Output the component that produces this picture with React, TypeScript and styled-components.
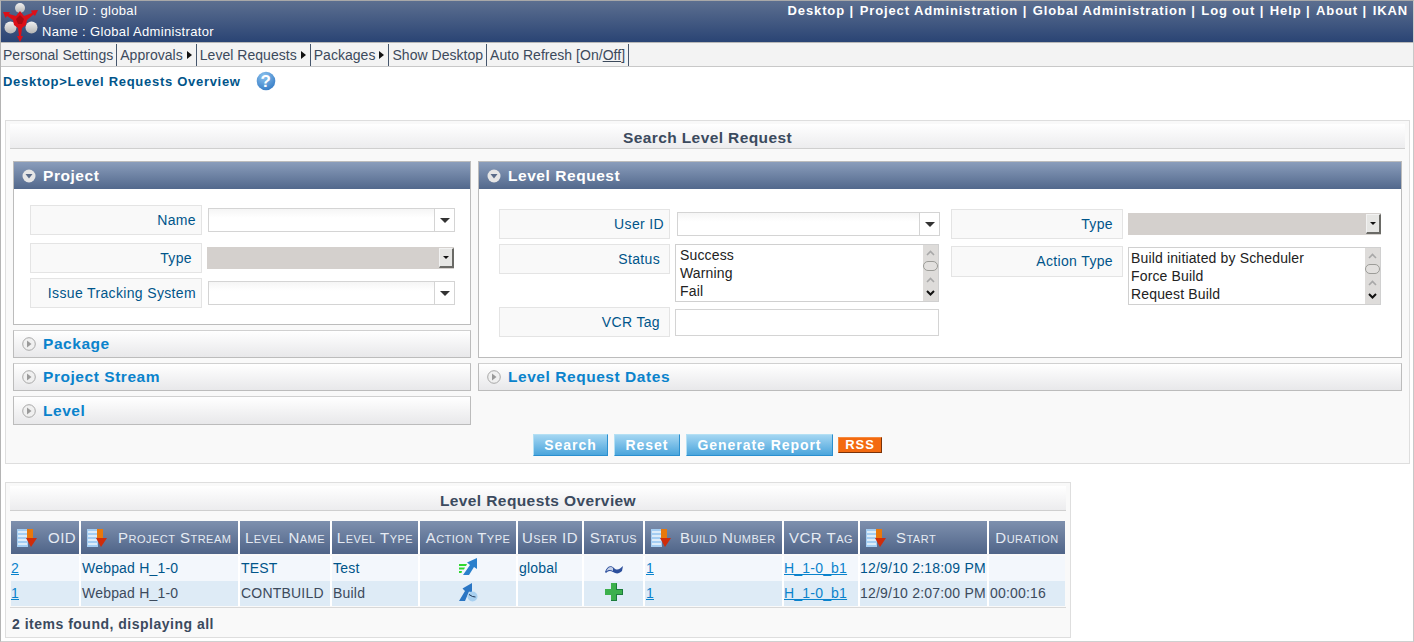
import React from 'react';
import styled, { createGlobalStyle } from 'styled-components';

const GlobalStyle = createGlobalStyle`
    html, body {
        margin: 0;
        padding: 0;
        background: #fff;
        font-family: "Liberation Sans", Arial, sans-serif;
    }
`;

const Page = styled.div`
    width: 1414px;
    height: 642px;
    box-sizing: border-box;
    border-top: 1px solid #a8a8a8;
    border-left: 1px solid #b4b4b4;
    border-right: 1px solid #c8c8c8;
    border-bottom: 1px solid #d0d0d0;
    overflow: hidden;
`;

const Header = styled.div`
    height: 41px;
    display: flex;
    justify-content: space-between;
    background: linear-gradient(#5c6f90, #2a4474);
    color: #fff;
    font-size: 13px;
`;

const UserBlock = styled.div`
    display: flex;
    gap: 1px;
`;

const UserText = styled.div`
    margin-top: -1px;
    line-height: 21px;
    letter-spacing: 0.35px;
`;

const TopNav = styled.div`
    font-weight: bold;
    letter-spacing: 0.89px;
    padding: 2px 5px 0 0;
    line-height: 15px;
`;

const TopLink = styled.span`
    margin-left: 5.55px;
`;

const Toolbar = styled.div`
    height: 25px;
    box-sizing: border-box;
    display: flex;
    align-items: center;
    background: #f3f3f3;
    border-top: 1px solid #b8b8b8;
    border-bottom: 1px solid #c8c8c8;
    font-size: 14px;
    letter-spacing: 0.03px;
    color: #3c4a5c;
    padding-left: 2px;
`;

const ToolItem = styled.div`
    height: 22px;
    line-height: 22px;
    padding-right: 3px;
    margin-right: 3px;
    border-right: 1px solid #46566c;
    display: flex;
    align-items: center;
    white-space: nowrap;
`;

const ToolArrow = styled.span`
    width: 0;
    height: 0;
    margin: 0 1px 0 4px;
    border-left: 5px solid #111;
    border-top: 4px solid transparent;
    border-bottom: 4px solid transparent;
`;

const Crumb = styled.div`
    height: 53px;
    box-sizing: border-box;
    display: flex;
    align-items: flex-start;
    padding: 3px 0 0 2px;
    color: #00558a;
    font-size: 13px;
    font-weight: bold;
    letter-spacing: 0.71px;
    line-height: 23px;
`;

const HelpBall = styled.svg`
    margin-left: 15px;
    margin-top: 1px;
`;

const Panel = styled.div<{ $width: number; $height: number; $top?: number }>`
    width: ${p => p.$width}px;
    height: ${p => p.$height}px;
    margin-left: 4px;
    margin-top: ${p => p.$top ?? 0}px;
    box-sizing: border-box;
    background: #f9f9f9;
    border: 1px solid #dedede;
    padding: 3px 4px 0;
`;

const PanelTitle = styled.div<{ $line: number }>`
    height: 25px;
    box-sizing: border-box;
    line-height: ${p => p.$line}px;
    text-align: center;
    font-size: 15.5px;
    font-weight: bold;
    letter-spacing: 0.4px;
    color: #3b4a5e;
    background: linear-gradient(#ffffff, #ececee);
    border-bottom: 1px solid #cfcfcf;
`;

const Columns = styled.div`
    display: flex;
    gap: 7px;
    margin: 12px 3px 0;
`;

const Column = styled.div<{ $width: number }>`
    width: ${p => p.$width}px;
    display: flex;
    flex-direction: column;
    gap: 5px;
`;

const Section = styled.div`
    box-sizing: border-box;
    border: 1px solid #bcbcbc;
    background: #fff;
`;

const SectionHead = styled.div<{ $open?: boolean; $height?: number }>`
    box-sizing: border-box;
    height: ${p => p.$height ?? (p.$open ? 27 : 28)}px;
    display: flex;
    align-items: center;
    gap: 7px;
    padding-left: 8px;
    font-size: 15.5px;
    font-weight: bold;
    letter-spacing: 0.55px;
    color: ${p => p.$open ? '#fff' : '#0a83cc'};
    background: ${p => p.$open ? 'linear-gradient(#8a9dbb, #52688c)' : 'linear-gradient(#ffffff, #e8e8ea)'};
    border-bottom: ${p => p.$open ? '0' : '1px solid #bcbcbc'};
    border-left: ${p => p.$open ? '0' : '1px solid #bcbcbc'};
    border-right: ${p => p.$open ? '0' : '1px solid #bcbcbc'};
    border-top: ${p => p.$open ? '0' : '1px solid #d0d0d0'};
`;

const ProjectBody = styled.div`
    height: 135px;
    box-sizing: border-box;
    padding: 16px 0 0 16px;
`;

const RequestBody = styled.div`
    height: 168px;
    box-sizing: border-box;
    padding: 20px 0 0 20px;
    display: flex;
    gap: 12px;
`;

const FieldStack = styled.div<{ $width: number }>`
    width: ${p => p.$width}px;
`;

const Row = styled.div<{ $top?: number; $gap: number }>`
    display: flex;
    align-items: flex-start;
    gap: ${p => p.$gap}px;
    margin-top: ${p => p.$top ?? 0}px;
`;

const Label = styled.div<{ $width: number; $pad: number; $height?: number }>`
    width: ${p => p.$width}px;
    height: ${p => p.$height ?? 30}px;
    flex: none;
    box-sizing: border-box;
    background: #f9f9f9;
    border: 1px solid #e4e4e4;
    text-align: right;
    padding-right: ${p => p.$pad}px;
    line-height: 28px;
    font-size: 14px;
    letter-spacing: 0.35px;
    color: #00558a;
    white-space: nowrap;
`;

const Combo = styled.div<{ $width: number; $top: number }>`
    width: ${p => p.$width}px;
    height: 24px;
    margin-top: ${p => p.$top}px;
    flex: none;
    box-sizing: border-box;
    display: flex;
    justify-content: flex-end;
    border: 1px solid #d4d4d4;
    background: linear-gradient(#f5f5f5, #fff 40%);
`;

const ComboButton = styled.div`
    width: 19px;
    border-left: 1px solid #d4d4d4;
    background: #fff;
    display: flex;
    align-items: center;
    justify-content: center;
`;

const ComboArrow = styled.span`
    width: 0;
    height: 0;
    border-top: 5px solid #333;
    border-left: 5px solid transparent;
    border-right: 5px solid transparent;
`;

const DisabledSelect = styled.div<{ $width: number; $top: number }>`
    width: ${p => p.$width}px;
    height: 22px;
    margin-top: ${p => p.$top}px;
    flex: none;
    box-sizing: border-box;
    background: #d4d0cd;
    display: flex;
    justify-content: flex-end;
    padding: 1px 0;
`;

const DisabledButton = styled.div`
    width: 15px;
    box-sizing: border-box;
    background: #e6e6e4;
    border-style: solid;
    border-width: 1px 2px 2px 1px;
    border-color: #f2f2f2 #6a6a66 #6a6a66 #f2f2f2;
    display: flex;
    align-items: center;
    justify-content: center;
`;

const TinyArrow = styled.span`
    width: 0;
    height: 0;
    border-top: 3px solid #111;
    border-left: 3px solid transparent;
    border-right: 3px solid transparent;
`;

const ListBox = styled.div<{ $width: number; $top?: number }>`
    width: ${p => p.$width}px;
    height: 58px;
    margin-top: ${p => p.$top ?? 0}px;
    flex: none;
    box-sizing: border-box;
    border: 1px solid #d0d0d0;
    background: #fff;
    display: flex;
    justify-content: space-between;
`;

const ListItems = styled.div<{ $pad: number }>`
    padding: 1px 0 0 ${p => p.$pad}px;
    font-size: 14px;
    line-height: 18px;
    letter-spacing: 0.15px;
    color: #222;
`;

const ScrollBar = styled.div`
    width: 15px;
    background: #dedcda;
    position: relative;
`;

const ScrollThumb = styled.div`
    position: absolute;
    left: 0;
    top: 16px;
    width: 15px;
    height: 10px;
    box-sizing: border-box;
    border: 1px solid #9c9c98;
    border-radius: 5px;
    background: #e2e0de;
`;

const Chevron = styled.svg<{ $top?: number; $bottom?: number }>`
    position: absolute;
    left: 3px;
    top: ${p => p.$top !== undefined ? `${p.$top}px` : 'auto'};
    bottom: ${p => p.$bottom !== undefined ? `${p.$bottom}px` : 'auto'};
`;

const TextBox = styled.div<{ $width: number; $top: number }>`
    width: ${p => p.$width}px;
    height: 27px;
    margin-top: ${p => p.$top}px;
    flex: none;
    box-sizing: border-box;
    border: 1px solid #d4d4d4;
    background: #fff;
`;

const Actions = styled.div`
    display: flex;
    justify-content: center;
    align-items: center;
    gap: 6px;
    margin-top: 9px;
`;

const ActionButton = styled.button<{ $width: number }>`
    width: ${p => p.$width}px;
    height: 22px;
    box-sizing: border-box;
    padding: 0;
    border: 0;
    border-top: 1px solid #b4e0f4;
    border-left: 1px solid #b4e0f4;
    border-bottom: 1px solid #2a8fcf;
    border-right: 1px solid #2a8fcf;
    background: linear-gradient(#a4d6f2, #4ba5dc);
    color: #fff;
    font-family: inherit;
    font-size: 14px;
    font-weight: bold;
    letter-spacing: 0.95px;
`;

const RssBadge = styled.div`
    width: 44px;
    height: 16px;
    box-sizing: border-box;
    margin-left: -1px;
    background: #f36a10;
    border: 1px solid;
    border-color: #f58a40 #7a3208 #7a3208 #f58a40;
    color: #fff;
    font-size: 13px;
    font-weight: bold;
    line-height: 13px;
    letter-spacing: 0.9px;
    text-align: center;
`;

const ResultTable = styled.table`
    width: 1054px;
    margin: 10px 0 0 1px;
    border-collapse: separate;
    border-spacing: 0;
    table-layout: fixed;
    font-size: 14px;
    letter-spacing: 0.2px;
`;

const Th = styled.th`
    height: 33px;
    padding: 0;
    box-sizing: border-box;
    background: linear-gradient(#7e90ae, #4f6488);
    border-right: 2px solid #fff;
    color: #e6ebf3;
    font-weight: normal;
    font-variant: small-caps;
    font-size: 15px;
    letter-spacing: 0.48px;
    text-align: center;
    white-space: nowrap;
    &:last-child {
        border-right: 0;
    }
`;

const ThInner = styled.div<{ $gap?: number }>`
    display: flex;
    align-items: center;
    justify-content: ${p => p.$gap ? 'flex-start' : 'center'};
    padding-left: ${p => p.$gap ? 6 : 0}px;
    gap: ${p => p.$gap ?? 0}px;
`;

const Td = styled.td<{ $center?: boolean; $flush?: boolean }>`
    height: 25px;
    padding: 0 0 ${p => p.$center ? 0 : 2}px ${p => p.$flush ? 0 : 1}px;
    box-sizing: border-box;
    border-right: 2px solid #fff;
    text-align: ${p => p.$center ? 'center' : 'left'};
    white-space: nowrap;
    vertical-align: middle;
    &:last-child {
        border-right: 0;
    }
`;

const Tr = styled.tr<{ $alt?: boolean }>`
    background: ${p => p.$alt ? '#deebf6' : '#f3f7fc'};
    color: ${p => p.$alt ? '#3c4a5c' : '#00558a'};
`;

const HeadSpacer = styled.tr`
    height: 2px;
`;

const CellLink = styled.a`
    color: #0a83cc;
    text-decoration: underline;
`;

const TableFoot = styled.div`
    border-top: 1px solid #d8d8d8;
    margin-top: 1px;
    height: 30px;
    padding-left: 2px;
    line-height: 32px;
    font-size: 14px;
    font-weight: bold;
    letter-spacing: 0.5px;
    color: #3b4a5e;
`;

function Logo() {
    return (
        <svg width="40" height="41" viewBox="0 0 40 41">
            <defs>
                <linearGradient id="logoBall" x1="0" y1="0" x2="0" y2="1">
                    <stop offset="0" stopColor="#f0f0f0" />
                    <stop offset="1" stopColor="#b4b4b4" />
                </linearGradient>
            </defs>
            <circle cx="19" cy="7" r="5" fill="url(#logoBall)" />
            <circle cx="9.5" cy="26.5" r="6" fill="url(#logoBall)" />
            <circle cx="30.5" cy="26.5" r="6" fill="url(#logoBall)" />
            <path
                d="M19 10 L23 15 L31 12 L30 9.5 L37 9 L34 15 L32.5 13.5 L26 19 L25 24 L21 27 L20 35 L22 35 L19 41 L16 35 L18 35 L17 27 L13 24 L12 19 L6 15 L4.5 17 L2 11 L9 11 L8 13 L15 15 Z"
                fill="#dc1018"
            />
            <path d="M19 14 L23 18 L21 23 L17 23 L15 18 Z" fill="#a80c14" />
        </svg>
    );
}

function Help() {
    return (
        <HelpBall width="20" height="21" viewBox="0 0 20 21">
            <defs>
                <radialGradient id="helpFill" cx="0.4" cy="0.25" r="0.85">
                    <stop offset="0" stopColor="#8cc2ee" />
                    <stop offset="1" stopColor="#2f76c2" />
                </radialGradient>
            </defs>
            <circle cx="10" cy="10" r="9.3" fill="url(#helpFill)" />
            <text x="10" y="16" textAnchor="middle" fontSize="17" fontWeight="bold" fontFamily="Liberation Sans" fill="#fff">?</text>
        </HelpBall>
    );
}

function Toggle({ open }: { open?: boolean }) {
    if (open) {
        return (
            <svg width="14" height="14" viewBox="0 0 14 14">
                <circle cx="7" cy="7" r="6.5" fill="#e6e6e6" />
                <path d="M3.5 5 L10.5 5 L7 9.5 Z" fill="#5a6b88" />
            </svg>
        );
    }
    return (
        <svg width="14" height="14" viewBox="0 0 14 14">
            <circle cx="7" cy="7" r="6.3" fill="#f0f0f0" stroke="#a8a8a8" />
            <path d="M5 3.5 L5 10.5 L9.5 7 Z" fill="#9a9a9a" />
        </svg>
    );
}

function SortIcon() {
    return (
        <svg width="20" height="18" viewBox="0 0 20 18">
            <rect x="0" y="0" width="11" height="18" fill="#a4cdf2" />
            <path d="M1 3 H10 M1 7 H10 M1 11 H10 M1 15 H10" stroke="#f0f6fc" strokeWidth="1.4" />
            <rect x="10" y="0" width="6" height="10" fill="#e8780c" />
            <path d="M9 9 H20 L14 18 Z" fill="#cf2c0a" />
        </svg>
    );
}

function ScrollTrack() {
    return (
        <ScrollBar>
            <Chevron $top={5} width="9" height="6" viewBox="0 0 9 6">
                <path d="M1 5 L4.5 1.5 L8 5" fill="none" stroke="#a8a8a8" strokeWidth="1.6" />
            </Chevron>
            <ScrollThumb />
            <Chevron $bottom={18} width="9" height="6" viewBox="0 0 9 6">
                <path d="M1 5 L4.5 1.5 L8 5" fill="none" stroke="#a8a8a8" strokeWidth="1.6" />
            </Chevron>
            <Chevron $bottom={5} width="9" height="6" viewBox="0 0 9 6">
                <path d="M1 1 L4.5 4.5 L8 1" fill="none" stroke="#111" strokeWidth="2" />
            </Chevron>
        </ScrollBar>
    );
}

function ActionForced() {
    return (
        <svg width="19" height="18" viewBox="0 0 19 18">
            <path d="M0 6 H8 L7 8 H0 Z M0 9.5 H6 L5 11.5 H0 Z M0 13 H3 L2.5 15 H0 Z" fill="#2fd82f" />
            <path d="M4 17 L11 7 L8 4.5 L18 0 L18 11 L15 9 L10 17 Z" fill="#2a80cc" />
        </svg>
    );
}

function ActionScheduled() {
    return (
        <svg width="19" height="19" viewBox="0 0 19 19">
            <path d="M0 18 L6 8 L3.5 5.5 L13 0 L13 10 L10 8.5 L6 18 Z" fill="#2a76c4" />
            <circle cx="13.5" cy="13.5" r="5" fill="#a8d0f0" />
            <path d="M10 11.5 L13.5 13.5 L16.5 14" stroke="#1c3454" strokeWidth="1" fill="none" />
        </svg>
    );
}

function StatusFlag() {
    return (
        <svg width="18" height="9" viewBox="0 0 18 9">
            <path d="M0 7 C2 1 6 0 9 3 C12 6 15 4 18 1 L17 6 C14 9 11 9 8 7 C5 5 3 6 1 8 Z" fill="#2c4f9c" />
            <path d="M1 6.5 C3 2 6 1 8 3 L8 6 C5 4.5 3 5 1 6.5 Z" fill="#c4cfe6" />
        </svg>
    );
}

function StatusPlus() {
    return (
        <svg width="18" height="18" viewBox="0 0 18 18">
            <path d="M6 0 H12 V6 H18 V12 H12 V18 H6 V12 H0 V6 H6 Z" fill="#3cb04c" />
            <path d="M12 0 V6 H18 V12 H12 V18 H6 V17 H11 V11 H17 V7 H11 V1 Z" fill="#1c7c3c" />
        </svg>
    );
}

const topLinks = ['Desktop', 'Project Administration', 'Global Administration', 'Log out', 'Help', 'About', 'IKAN'];

const toolItems = [
    { label: 'Personal Settings' },
    { label: 'Approvals', arrow: true },
    { label: 'Level Requests', arrow: true },
    { label: 'Packages', arrow: true },
    { label: 'Show Desktop' },
];

const columnWidths = [70, 159, 92, 88, 98, 66, 61, 139, 76, 129, 76];

const columns = [
    { title: 'OID', gap: 11 },
    { title: 'Project Stream', gap: 11 },
    { title: 'Level Name' },
    { title: 'Level Type' },
    { title: 'Action Type' },
    { title: 'User ID' },
    { title: 'Status' },
    { title: 'Build Number', gap: 9 },
    { title: 'VCR Tag' },
    { title: 'Start', gap: 10 },
    { title: 'Duration' },
];

function App() {
    return (
        <Page>
            <GlobalStyle />
            <Header>
                <UserBlock>
                    <Logo />
                    <UserText>
                        User ID : global<br />
                        Name : Global Administrator
                    </UserText>
                </UserBlock>
                <TopNav>
                    {topLinks.map((link, i) => (
                        <TopLink key={link}>{link}{i < topLinks.length - 1 ? ' |' : ''}</TopLink>
                    ))}
                </TopNav>
            </Header>
            <Toolbar>
                {toolItems.map(item => (
                    <ToolItem key={item.label}>
                        {item.label}
                        {item.arrow && <ToolArrow />}
                    </ToolItem>
                ))}
                <ToolItem>Auto Refresh [On/<u>Off</u>]</ToolItem>
            </Toolbar>
            <Crumb>
                Desktop&gt;Level Requests Overview
                <Help />
            </Crumb>
            <Panel $width={1405} $height={344}>
                <PanelTitle $line={27}>Search Level Request</PanelTitle>
                <Columns>
                    <Column $width={458}>
                        <Section>
                            <SectionHead $open><Toggle open />Project</SectionHead>
                            <ProjectBody>
                                <Row $gap={6}>
                                    <Label $width={172} $pad={5}>Name</Label>
                                    <Combo $width={247} $top={3}><ComboButton><ComboArrow /></ComboButton></Combo>
                                </Row>
                                <Row $gap={5} $top={8}>
                                    <Label $width={172} $pad={9}>Type</Label>
                                    <DisabledSelect $width={247} $top={4}><DisabledButton><TinyArrow /></DisabledButton></DisabledSelect>
                                </Row>
                                <Row $gap={6} $top={5}>
                                    <Label $width={172} $pad={5}>Issue Tracking System</Label>
                                    <Combo $width={247} $top={3}><ComboButton><ComboArrow /></ComboButton></Combo>
                                </Row>
                            </ProjectBody>
                        </Section>
                        <SectionHead><Toggle />Package</SectionHead>
                        <SectionHead><Toggle />Project Stream</SectionHead>
                        <SectionHead $height={29}><Toggle />Level</SectionHead>
                    </Column>
                    <Column $width={924}>
                        <Section>
                            <SectionHead $open><Toggle open />Level Request</SectionHead>
                            <RequestBody>
                                <FieldStack $width={440}>
                                    <Row $gap={7}>
                                        <Label $width={171} $pad={5}>User ID</Label>
                                        <Combo $width={263} $top={3}><ComboButton><ComboArrow /></ComboButton></Combo>
                                    </Row>
                                    <Row $gap={5} $top={5}>
                                        <Label $width={171} $pad={9}>Status</Label>
                                        <ListBox $width={264}>
                                            <ListItems $pad={4}>Success<br />Warning<br />Fail</ListItems>
                                            <ScrollTrack />
                                        </ListBox>
                                    </Row>
                                    <Row $gap={5} $top={5}>
                                        <Label $width={171} $pad={9}>VCR Tag</Label>
                                        <TextBox $width={264} $top={2} />
                                    </Row>
                                </FieldStack>
                                <FieldStack $width={430}>
                                    <Row $gap={5}>
                                        <Label $width={172} $pad={9}>Type</Label>
                                        <DisabledSelect $width={253} $top={4}><DisabledButton><TinyArrow /></DisabledButton></DisabledSelect>
                                    </Row>
                                    <Row $gap={5} $top={7}>
                                        <Label $width={172} $pad={9} $height={31}>Action Type</Label>
                                        <ListBox $width={253} $top={1}>
                                            <ListItems $pad={2}>Build initiated by Scheduler<br />Force Build<br />Request Build</ListItems>
                                            <ScrollTrack />
                                        </ListBox>
                                    </Row>
                                </FieldStack>
                            </RequestBody>
                        </Section>
                        <SectionHead><Toggle />Level Request Dates</SectionHead>
                    </Column>
                </Columns>
                <Actions>
                    <ActionButton $width={75}>Search</ActionButton>
                    <ActionButton $width={66}>Reset</ActionButton>
                    <ActionButton $width={147}>Generate Report</ActionButton>
                    <RssBadge>RSS</RssBadge>
                </Actions>
            </Panel>
            <Panel $width={1066} $height={156} $top={18}>
                <PanelTitle $line={29}>Level Requests Overview</PanelTitle>
                <ResultTable>
                    <colgroup>
                        {columnWidths.map((w, i) => <col key={i} style={{ width: w }} />)}
                    </colgroup>
                    <thead>
                        <tr>
                            {columns.map(col => (
                                <Th key={col.title}>
                                    <ThInner $gap={col.gap}>
                                        {col.gap && <SortIcon />}
                                        {col.title}
                                    </ThInner>
                                </Th>
                            ))}
                        </tr>
                        <HeadSpacer />
                    </thead>
                    <tbody>
                        <Tr>
                            <Td $flush><CellLink>2</CellLink></Td>
                            <Td>Webpad H_1-0</Td>
                            <Td>TEST</Td>
                            <Td>Test</Td>
                            <Td $center><ActionForced /></Td>
                            <Td>global</Td>
                            <Td $center><StatusFlag /></Td>
                            <Td><CellLink>1</CellLink></Td>
                            <Td $flush><CellLink>H_1-0_b1</CellLink></Td>
                            <Td $flush>12/9/10 2:18:09 PM</Td>
                            <Td />
                        </Tr>
                        <Tr $alt>
                            <Td $flush><CellLink>1</CellLink></Td>
                            <Td>Webpad H_1-0</Td>
                            <Td>CONTBUILD</Td>
                            <Td>Build</Td>
                            <Td $center><ActionScheduled /></Td>
                            <Td />
                            <Td $center><StatusPlus /></Td>
                            <Td><CellLink>1</CellLink></Td>
                            <Td $flush><CellLink>H_1-0_b1</CellLink></Td>
                            <Td $flush>12/9/10 2:07:00 PM</Td>
                            <Td>00:00:16</Td>
                        </Tr>
                    </tbody>
                </ResultTable>
                <TableFoot>2 items found, displaying all</TableFoot>
            </Panel>
        </Page>
    );
}

export default App;
